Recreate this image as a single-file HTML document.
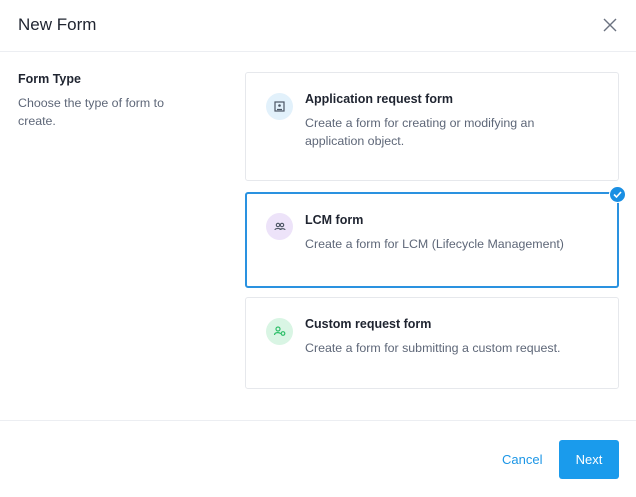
<!DOCTYPE html>
<html><head><style>
*{box-sizing:border-box;margin:0;padding:0}
body{width:636px;height:497px;background:#fff;font-family:"Liberation Sans",sans-serif;position:relative;overflow:hidden;color:#1f2430}
.hdr{position:absolute;left:0;top:0;width:636px;height:52px;border-bottom:1px solid #eceef2}
.hdr h1{position:absolute;left:18px;top:15px;font-size:17px;font-weight:normal;color:#1f2430}
.x{position:absolute;left:603px;top:18px}
.lab{position:absolute;left:18px;top:72px;font-size:12.5px;font-weight:bold;color:#1f2430}
.sub{position:absolute;left:18px;top:94px;width:170px;font-size:12.4px;line-height:18px;color:#5e6778}
.card{position:absolute;left:245px;width:374px;border:1px solid #e6e8ec;border-radius:3px}
.card.sel{border:2px solid #2a92e0}
.ic{position:absolute;left:20px;top:20px;width:27px;height:27px;border-radius:50%}
.t{position:absolute;left:59px;top:19px;font-size:12.5px;font-weight:bold;color:#1f2430}
.d{position:absolute;left:59px;top:41px;width:280px;font-size:12.4px;line-height:18px;color:#5e6778}
.foot{position:absolute;left:0;top:420px;width:636px;border-top:1px solid #eceef2}
.cancel{position:absolute;left:502px;top:452px;font-size:13px;color:#1c96e6}
.next{position:absolute;left:559px;top:440px;width:60px;height:39px;background:#1a9bec;border-radius:3px;color:#fff;font-size:13px;text-align:center;line-height:39px}
.chk{position:absolute;left:609px;top:186px;width:17px;height:17px;border-radius:50%;background:#1a8fe3;border:1px solid #fff}
</style></head><body>
<div class="hdr"><h1>New Form</h1>
<svg class="x" width="14" height="14" viewBox="0 0 14 14"><path d="M1 1L13 13M13 1L1 13" stroke="#6b7280" stroke-width="1.4"/></svg></div>
<div class="lab">Form Type</div>
<div class="sub">Choose the type of form to create.</div>
<div class="card" style="top:72px;height:109px">
<div class="ic" style="background:#e2f1fb"><svg width="27" height="27"><rect x="9" y="9" width="9" height="9" fill="none" stroke="#4b5563" stroke-width="1.2"/><circle cx="13.5" cy="12.5" r="1.3" fill="#4b5563"/><path d="M11 16.5h5" stroke="#4b5563" stroke-width="1.2"/></svg></div>
<div class="t">Application request form</div>
<div class="d">Create a form for creating or modifying an application object.</div></div>
<div class="card sel" style="top:192px;height:96px">
<div class="ic" style="background:#ede3f9;left:19px;top:19px"><svg width="27" height="27"><circle cx="12" cy="12" r="1.7" fill="none" stroke="#4b5563" stroke-width="1.1"/><circle cx="16" cy="12" r="1.7" fill="none" stroke="#4b5563" stroke-width="1.1"/><path d="M9 17c0-2 6-2 6 0M14 17c0-1.5 5-2 5 0" fill="none" stroke="#4b5563" stroke-width="1.1"/></svg></div>
<div class="t" style="left:58px;top:19px">LCM form</div>
<div class="d" style="left:58px;top:41px;width:320px">Create a form for LCM (Lifecycle Management)</div></div>
<div class="chk"><svg width="15" height="15"><path d="M4 7.5l2.5 2.5 4.5-5" fill="none" stroke="#fff" stroke-width="1.6"/></svg></div>
<div class="card" style="top:297px;height:92px">
<div class="ic" style="background:#d9f5e4;top:20px"><svg width="27" height="27"><circle cx="12" cy="11" r="2" fill="none" stroke="#2fbf6a" stroke-width="1.2"/><path d="M8.5 17c0-3 6-3 6-1" fill="none" stroke="#2fbf6a" stroke-width="1.2"/><circle cx="17" cy="15.5" r="1.8" fill="none" stroke="#2fbf6a" stroke-width="1.2"/></svg></div>
<div class="t" style="top:19px">Custom request form</div>
<div class="d" style="width:300px">Create a form for submitting a custom request.</div></div>
<div class="foot"></div>
<div class="cancel">Cancel</div>
<div class="next">Next</div>
</body></html>
